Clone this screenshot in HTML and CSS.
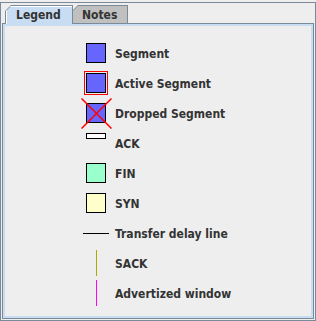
FILE: index.html
```html
<!DOCTYPE html>
<html lang="en">

<head>
	<meta charset="UTF-8">
	<title>Legend</title>
	<link rel="stylesheet" href="styles.css">
</head>

<body>
	<div class="window">
		<div class="tabs">
			<div class="tab tab-selected"><span class="tab-face">Legend</span></div>
			<div class="tab tab-notes"><span class="tab-face">Notes</span></div>
		</div>
		<div class="panel">
			<ul class="legend">
				<li class="row">
					<span class="icon"><span class="box box-seg"></span></span>
					<span class="label">Segment</span>
				</li>
				<li class="row">
					<span class="icon"><span class="active"><span class="box box-seg"></span></span></span>
					<span class="label">Active Segment</span>
				</li>
				<li class="row">
					<span class="icon">
						<span class="box box-seg"></span>
						<svg class="cross" width="31" height="31" viewBox="0 0 31 31">
							<line x1="0.5" y1="0.5" x2="30.5" y2="30.5" stroke="#ff0000" stroke-width="1.5" />
							<line x1="30.5" y1="0.5" x2="0.5" y2="30.5" stroke="#ff0000" stroke-width="1.5" />
						</svg>
					</span>
					<span class="label">Dropped Segment</span>
				</li>
				<li class="row">
					<span class="icon icon-top"><span class="box box-ack"></span></span>
					<span class="label">ACK</span>
				</li>
				<li class="row">
					<span class="icon"><span class="box box-fin"></span></span>
					<span class="label">FIN</span>
				</li>
				<li class="row">
					<span class="icon"><span class="box box-syn"></span></span>
					<span class="label">SYN</span>
				</li>
				<li class="row">
					<span class="icon"><span class="hline"></span></span>
					<span class="label">Transfer delay line</span>
				</li>
				<li class="row">
					<span class="icon"><span class="vline vline-sack"></span></span>
					<span class="label">SACK</span>
				</li>
				<li class="row">
					<span class="icon"><span class="vline vline-win"></span></span>
					<span class="label">Advertized window</span>
				</li>
			</ul>
		</div>
	</div>
</body>

</html>
```

FILE: styles.css
```css
* {
	margin: 0;
	padding: 0;
	box-sizing: border-box;
}

body {
	background: #eeeeee;
	font-family: "DejaVu Sans Condensed", "DejaVu Sans", "Liberation Sans", sans-serif;
	font-stretch: condensed;
	font-size: 12px;
	font-weight: bold;
	color: #333333;
}

.window {
	display: flex;
	flex-direction: column;
	width: 316px;
	height: 319px;
	margin-top: 2px;
	padding: 2px 1px 1px 1px;
	border: 1px solid #7a8a99;
}

/* tab strip */
.tabs {
	display: flex;
	align-items: flex-start;
	height: 19px;
	padding-left: 3px;
	margin-bottom: -1px;
	position: relative;
	z-index: 1;
}

.tab {
	display: block;
	height: 18px;
	padding: 1px 1px 0 1px;
	background: #7a8a99;
	clip-path: polygon(6px 0, 100% 0, 100% 100%, 0 100%, 0 6px);
}

.tab-face {
	display: block;
	height: 100%;
	padding-left: 9px;
	line-height: 18px;
	background: #c0c0c0;
	clip-path: polygon(5px 0, 100% 0, 100% 100%, 0 100%, 0 5px);
}

.tab-selected {
	width: 68px;
	height: 19px;
}

.tab-selected .tab-face {
	padding-left: 10px;
	background: #c8ddf2;
	box-shadow: inset 1px 1px 0 #ffffff;
}

.tab-notes {
	width: 56px;
	margin-left: -1px;
}

/* content panel */
.panel {
	flex: 1;
	border: 1px solid #7a8a99;
	background: #eeeeee;
	box-shadow: inset 0 0 0 2px #c8ddf2;
	padding: 14px 0 0 78px;
}

.legend {
	list-style: none;
}

.row {
	display: flex;
	align-items: center;
	height: 30px;
}

.label {
	padding-top: 2px;
}

.icon {
	position: relative;
	display: flex;
	align-items: center;
	justify-content: center;
	width: 30px;
	height: 30px;
	margin-right: 4px;
}

.icon-top {
	align-items: flex-start;
	padding-top: 5px;
}

.box {
	display: block;
	width: 20px;
	height: 20px;
	border: 1px solid #000000;
}

.box-seg {
	background: #6666ff;
}

.box-ack {
	height: 6px;
	background: #ffffff;
}

.box-fin {
	background: #99ffcc;
}

.box-syn {
	background: #ffffcc;
}

.active {
	display: block;
	padding: 1px;
	border: 1px solid #ff0000;
}

.cross {
	position: absolute;
	left: 0;
	top: 0;
}

.hline {
	display: block;
	width: 26px;
	height: 1px;
	background: #000000;
}

.vline {
	display: block;
	width: 1px;
	height: 26px;
}

.vline-sack {
	background: #aaaa00;
}

.vline-win {
	background: #ff00ff;
}
```
